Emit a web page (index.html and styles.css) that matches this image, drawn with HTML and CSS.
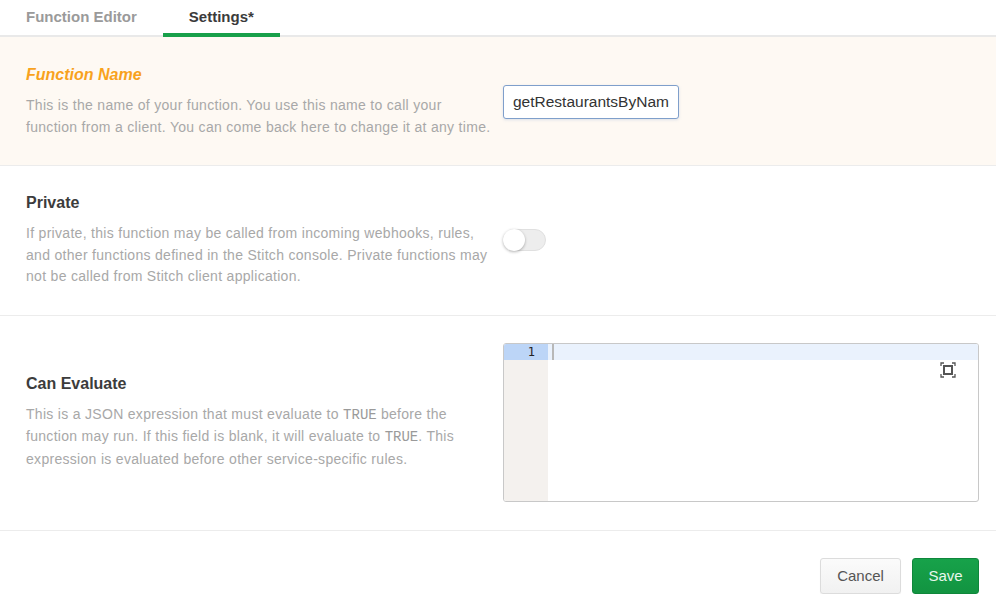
FILE: index.html
```html
<!DOCTYPE html>
<html>
<head>
<meta charset="utf-8">
<link rel="stylesheet" href="styles.css">
</head>
<body>
<div class="tabs">
  <div class="tab">Function Editor</div>
  <div class="tab tab-active">Settings*</div>
</div>
<div class="section section-highlight">
  <div class="left">
    <div class="title title-orange">Function Name</div>
    <div class="desc">This is the name of your function. You use this name to call your function from a client. You can come back here to change it at any time.</div>
  </div>
  <div class="right">
    <input class="name-input" type="text" value="getRestaurantsByName">
  </div>
</div>
<div class="section section-private">
  <div class="left">
    <div class="title">Private</div>
    <div class="desc desc-tight">If private, this function may be called from incoming webhooks, rules, and other functions defined in the Stitch console. Private functions may not be called from Stitch client application.</div>
  </div>
  <div class="right">
    <div class="toggle"><div class="knob"></div></div>
  </div>
</div>
<div class="section section-eval">
  <div class="left">
    <div class="title">Can Evaluate</div>
    <div class="desc desc-tight">This is a JSON expression that must evaluate to <span class="mono">TRUE</span> before the function may run. If this field is blank, it will evaluate to <span class="mono">TRUE</span>. This expression is evaluated before other service-specific rules.</div>
  </div>
  <div class="right">
    <div class="editor">
      <div class="gutter">
        <div class="lineno">1</div>
      </div>
      <div class="code">
        <div class="code-line"><span class="cursor"></span></div>
        <svg class="fs-icon" width="16" height="16" viewBox="0 0 16 16">
          <path d="M1 4V1h3M12 1h3v3M15 12v3h-3M4 15H1v-3" fill="none" stroke="#555" stroke-width="1.3"/>
          <rect x="4" y="4" width="8" height="8" fill="none" stroke="#555" stroke-width="2"/>
        </svg>
      </div>
    </div>
  </div>
</div>
<div class="footer">
  <button class="btn btn-cancel">Cancel</button>
  <button class="btn btn-save">Save</button>
</div>
</body>
</html>
```

FILE: styles.css
```css
* { box-sizing: border-box; }
html, body { margin: 0; padding: 0; background: #fff; }
body {
  font-family: "Liberation Sans", Arial, Helvetica, sans-serif;
  color: #333;
  width: 996px;
  overflow: hidden;
}
.tabs {
  display: flex;
  height: 37px;
  border-bottom: 2px solid #e9e9e9;
}
.tab {
  padding: 8px 26px 0;
  font-size: 15px;
  font-weight: bold;
  color: #9a9a9a;
  height: 37px;
  line-height: 18px;
  white-space: nowrap;
}
.tab-active {
  color: #3b3b3b;
  border-bottom: 4px solid #18a04a;
}
.section {
  display: flex;
  align-items: center;
  border-bottom: 1px solid #ececec;
  padding: 28px 17px 27px 26px;
}
.section-highlight { background: #fef9f3; }
.section-private { padding: 27px 17px 27px 26px; }
.section-eval { padding: 27px 17px 28px 26px; }
.left {
  width: 470px;
  flex: none;
}
.right {
  flex: 1;
  margin-left: 7px;
  display: flex;
}
.title {
  font-size: 16px;
  font-weight: bold;
  line-height: 20px;
  color: #3c3c3c;
}
.title-orange {
  color: #f8a21d;
  font-style: italic;
}
.desc {
  margin-top: 9px;
  font-size: 14px;
  letter-spacing: 0.3px;
  line-height: 22px;
  color: #a8a8a8;
}
.desc-tight {
  margin-top: 10px;
  line-height: 21.5px;
}
.mono {
  font-family: "Liberation Mono", "Courier New", monospace;
  font-size: 14px;
  letter-spacing: 0;
  color: #9a9a9a;
}
.name-input {
  width: 176px;
  height: 34px;
  border: 1px solid #7f9fcb;
  border-radius: 3px;
  padding: 0 9px;
  font-family: "Liberation Sans", Arial, sans-serif;
  font-size: 15.5px;
  color: #333;
  background: #fff;
  box-shadow: 0 1px 3px rgba(120, 150, 200, 0.25);
  outline: none;
}
.toggle {
  width: 43px;
  height: 22px;
  border-radius: 11px;
  background: #ededed;
  border: 1px solid #e0e0e0;
  position: relative;
}
.knob {
  position: absolute;
  left: -1px;
  top: -1px;
  width: 22px;
  height: 22px;
  border-radius: 50%;
  background: #fff;
  box-shadow: 0 1px 3px rgba(0, 0, 0, 0.3);
}
.editor {
  width: 476px;
  height: 159px;
  border: 1px solid #c8c8c8;
  border-radius: 3px;
  display: flex;
  overflow: hidden;
  background: #fff;
}
.gutter {
  width: 44px;
  background: #f4f1ee;
  flex: none;
}
.lineno {
  height: 16px;
  background: #bcd5f7;
  font-family: "DejaVu Sans Mono", "Liberation Mono", monospace;
  font-size: 12px;
  line-height: 16px;
  text-align: right;
  padding-right: 13px;
  color: #222;
}
.code {
  flex: 1;
  position: relative;
}
.code-line {
  height: 16px;
  background: #eaf2fd;
  padding-left: 4px;
}
.cursor {
  display: inline-block;
  width: 2px;
  height: 16px;
  background: #b8b8b8;
}
.fs-icon {
  position: absolute;
  top: 18px;
  right: 22px;
}
.footer {
  display: flex;
  justify-content: flex-end;
  gap: 11px;
  padding: 27px 17px 0 0;
}
.btn {
  height: 36px;
  border-radius: 3px;
  font-family: "Liberation Sans", Arial, sans-serif;
  font-size: 15px;
  padding: 0;
  cursor: pointer;
}
.btn-cancel {
  width: 81px;
  background: linear-gradient(#fbfbfb, #f1f1f1);
  border: 1px solid #dcdcdc;
  color: #555;
  box-shadow: 0 1px 1px rgba(0,0,0,0.06);
}
.btn-save {
  width: 67px;
  background: linear-gradient(#17a24a, #129441);
  border: 1px solid #0f873b;
  color: #e8f7ec;
}
```
